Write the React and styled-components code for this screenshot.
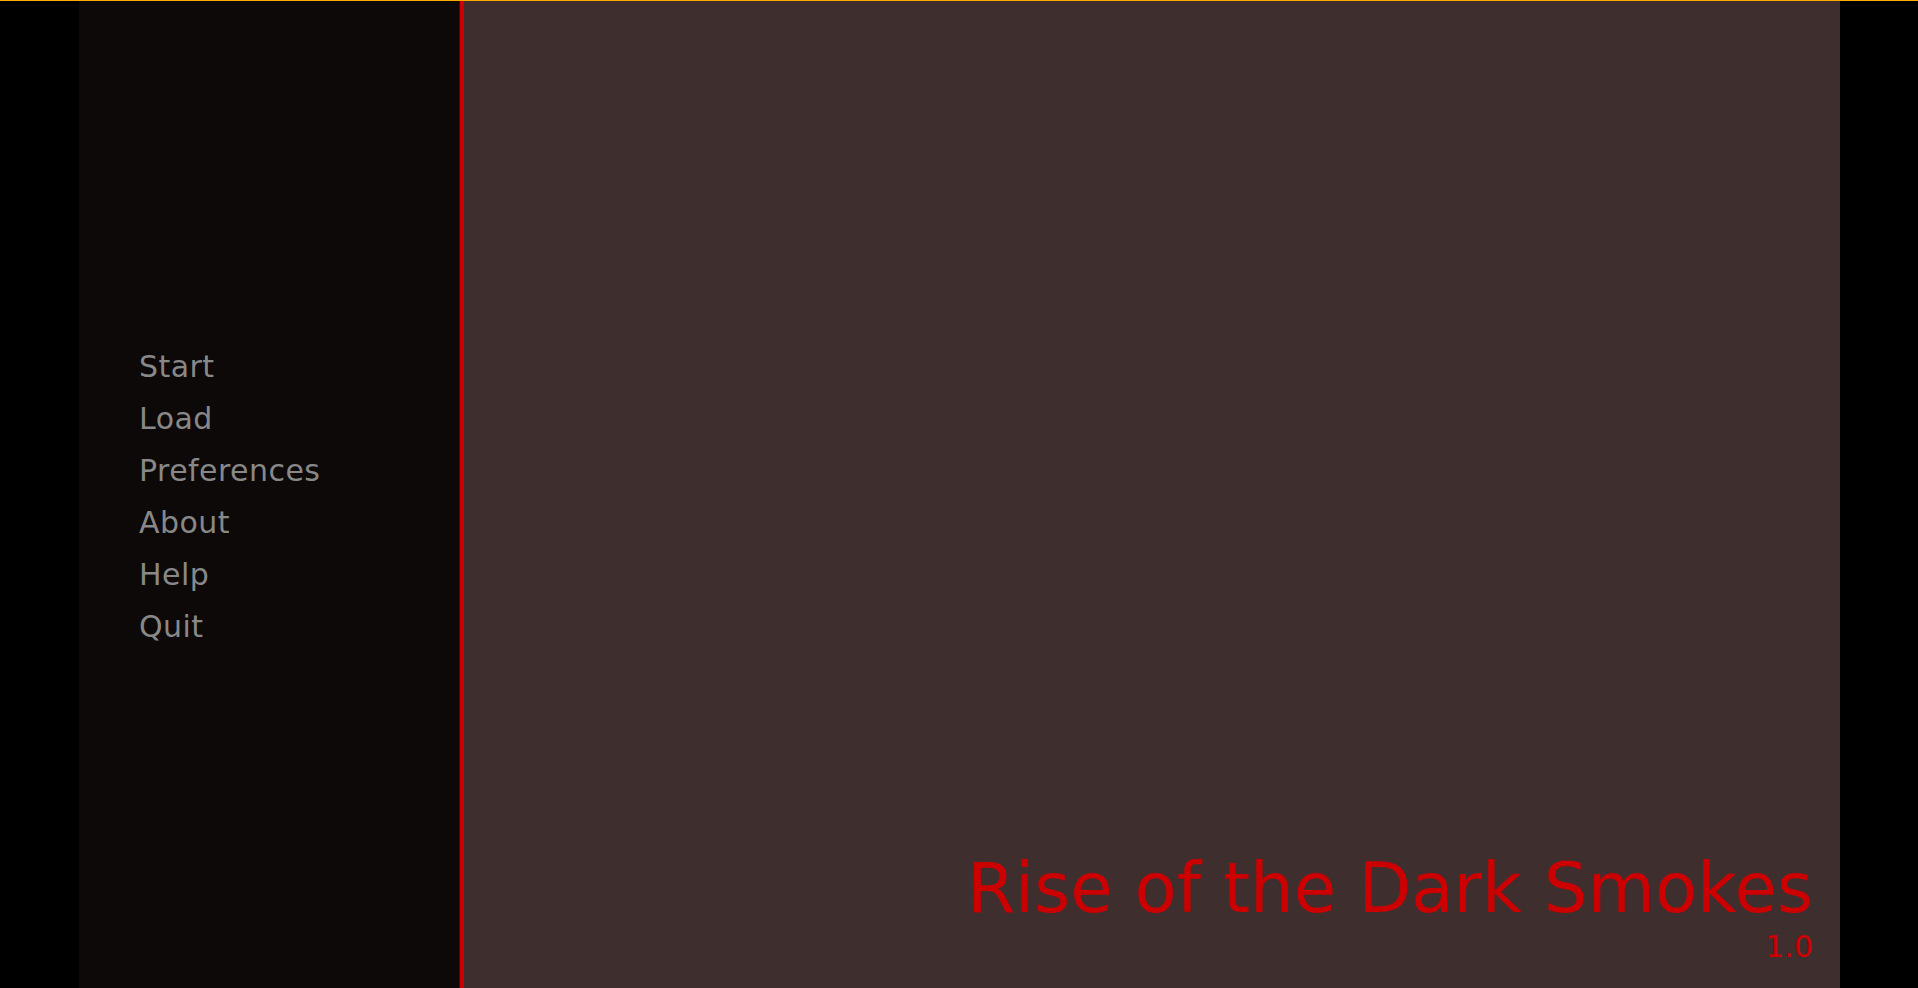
import React from "react";
import styled, { createGlobalStyle } from "styled-components";

const Global = createGlobalStyle`
  html, body {
    margin: 0;
    padding: 0;
    background: #000000;
    overflow: hidden;
  }
  body {
    font-family: "DejaVu Sans", "Liberation Sans", sans-serif;
  }
`;

const Screen = styled.div`
  width: 1918px;
  height: 988px;
  box-sizing: border-box;
  border-top: 1px solid #ffaa00;
  background: #000000;
  display: flex;
  justify-content: center;
  padding: 0 78px 0 79px;
`;

const Game = styled.div`
  flex: 1;
  display: flex;
  background: #3f2e2e;
`;

const Sidebar = styled.nav`
  width: 385px;
  flex: none;
  box-sizing: border-box;
  background: #0c0908;
  border-right: 4px solid #cc0000;
  box-shadow: inset -1px 0 0 #5a0202;
  padding: 340px 0 0 60px;
  display: flex;
  flex-direction: column;
`;

const MenuItem = styled.a`
  display: block;
  font-size: 30px;
  letter-spacing: 0.45px;
  line-height: 52px;
  color: #888888;
  text-decoration: none;
  cursor: pointer;
  width: max-content;
  &:hover {
    color: #cc0000;
  }
`;

const Stage = styled.main`
  flex: 1;
  display: flex;
  flex-direction: column;
  justify-content: flex-end;
  align-items: flex-end;
  padding: 0 27px 26px 0;
`;

const Title = styled.h1`
  margin: 0;
  font-weight: normal;
  font-size: 69px;
  line-height: 69px;
  color: #cc0000;
  white-space: nowrap;
`;

const Version = styled.div`
  margin-top: 9px;
  font-size: 30px;
  line-height: 30px;
  color: #cc0000;
`;

const items = ["Start", "Load", "Preferences", "About", "Help", "Quit"];

export default function App() {
  return (
    <>
      <Global />
      <Screen>
        <Game>
          <Sidebar>
            {items.map((label) => (
              <MenuItem key={label}>{label}</MenuItem>
            ))}
          </Sidebar>
          <Stage>
            <Title>Rise of the Dark Smokes</Title>
            <Version>1.0</Version>
          </Stage>
        </Game>
      </Screen>
    </>
  );
}
